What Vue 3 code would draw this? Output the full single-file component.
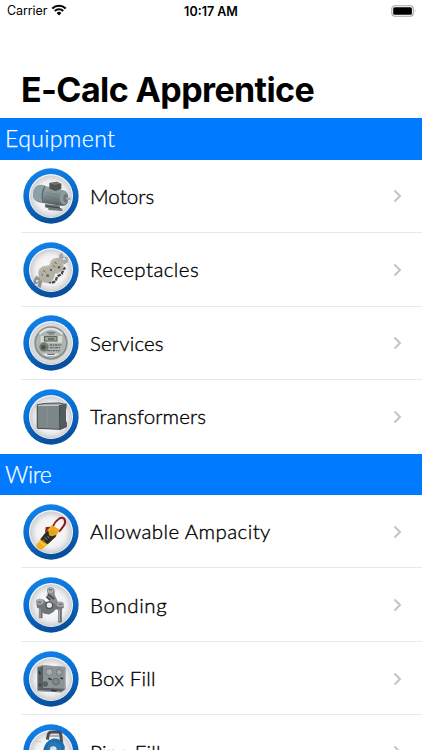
<template>
    <div class="screen">
        <div class="status-bar">
            <div class="status-bar--carrier">
                <span>Carrier</span>
                <svg class="wifi" viewBox="0 0 16 12">
                    <path d="M1.3 4.4a9.6 9.6 0 0 1 13.4 0" />
                    <path d="M3.8 7a6 6 0 0 1 8.4 0" />
                    <path class="wifi--dot" d="M8 11.4 5.6 9a3.4 3.4 0 0 1 4.8 0z" />
                </svg>
            </div>
            <div class="status-bar--time">10:17 AM</div>
            <svg class="battery" viewBox="0 0 26 12">
                <rect x="0.8" y="0.8" width="21.5" height="10.4" rx="3" fill="none" stroke="#a5a5a5" stroke-width="1.1" />
                <rect x="2.2" y="2.2" width="18.7" height="7.6" rx="1.5" />
                <path d="M23.8 4.2q1.5 1.8 0 3.6z" fill="#a5a5a5" />
            </svg>
        </div>

        <h1 class="title">E-Calc Apprentice</h1>

        <section v-for="section in sections" :key="section.title">
            <h2 class="section-header" :style="{ letterSpacing: section.spacing + 'px' }">{{ section.title }}</h2>
            <div v-for="item in section.items" :key="item.label" class="row">
                <svg class="badge" viewBox="-84 -84 168 168">
                    <defs>
                        <linearGradient id="ring" x1="0" y1="0" x2="0.3" y2="1">
                            <stop offset="0" stop-color="#1286ee" />
                            <stop offset="0.5" stop-color="#0b70d2" />
                            <stop offset="1" stop-color="#08509d" />
                        </linearGradient>
                        <radialGradient id="plate">
                            <stop offset="0" stop-color="#fff" />
                            <stop offset="0.7" stop-color="#f1f1f3" />
                            <stop offset="1" stop-color="#cdced2" />
                        </radialGradient>
                        <linearGradient id="metal" x1="0" y1="0" x2="0" y2="1">
                            <stop offset="0" stop-color="#a0acaf" />
                            <stop offset="0.5" stop-color="#7f8d90" />
                            <stop offset="1" stop-color="#505b5e" />
                        </linearGradient>
                    </defs>
                    <circle r="83" fill="url(#ring)" />
                    <circle r="66" fill="#f4f7fb" />
                    <circle cy="1" r="63" fill="url(#plate)" />

                    <g v-if="item.icon === 'motor'" transform="translate(-109 -104)">
                        <path d="M91 128l44 4v7l8 3v7l-42-3v-5l-10-3z" fill="#6d7779" />
                        <path d="M94 134l42 6" stroke="#353e40" stroke-width="3" />
                        <path d="M66 74q10-6 28 0l50 12q15 4 16 18l-1 20q-5 11-20 9l-59-9q-21-4-25-18-1-23 11-32z" fill="url(#metal)" />
                        <path d="M67 74q10-7 26 0-12 17-6 50l-11-3q-19-4-21-18-1-19 12-29z" fill="#8ba1a7" />
                        <path d="M91 75q-13 20-6 49" fill="none" stroke="#5a686c" stroke-width="4" />
                        <path d="M96 94l44 9M94 103l45 9M95 112l43 9" stroke="#6d7b7e" stroke-width="2" />
                        <ellipse cx="148" cy="109" rx="13" ry="21" fill="#8d9a9c" />
                        <ellipse cx="153" cy="111" rx="7" ry="13" fill="#6b7678" />
                        <path d="M153 111l15 2" stroke="#a2a7a4" stroke-width="6" />
                        <path d="M104 65l22-4 14 6v16l-18 6-18-7z" fill="#50554f" />
                        <path d="M105 65l21-2 12 4-18 4z" fill="#727971" />
                    </g>

                    <g v-else-if="item.icon === 'receptacle'" transform="translate(-109 -105)">
                        <path d="M56 137l9-15 19 12-6 24-9-2 2-12-13 5z" fill="#8e9291" />
                        <path d="M133 61l9-9 5 13 12 2 1 13-10 8-17-10z" fill="#a3a7a5" />
                        <circle cx="68" cy="138" r="4" fill="#ddd" />
                        <circle cx="148" cy="72" r="4" fill="#e2e2e2" />
                        <path d="M99 139l12 5 12-6 4-13 14-8 6-15 5-4" fill="none" stroke="#454a47" stroke-width="7" stroke-dasharray="11 3" />
                        <path d="M72 106q6-14 22-14l10-2q3-20 22-22 15-1 20 15 4 20-10 29-8 6-15 4-1 18-16 26-15 5-26-5-11-12-7-31z" fill="#b4b1a5" />
                        <path d="M74 106q7-12 21-12l11-2q4-17 20-21" fill="none" stroke="#cfccc1" stroke-width="3" />
                        <path d="M86 106l6 6M80 117l5 5M120 81l6 6M116 92l5 5" stroke="#57564f" stroke-width="3" />
                        <circle cx="99" cy="122" r="4" fill="#64625b" />
                        <circle cx="133" cy="97" r="4" fill="#64625b" />
                        <circle cx="109" cy="105" r="3" fill="#45453f" />
                    </g>

                    <g v-else-if="item.icon === 'meter'" transform="translate(-109 -107)">
                        <circle cx="109" cy="107" r="54" fill="#d3d7d7" />
                        <circle cx="109" cy="107" r="50" fill="#858d8b" />
                        <circle cx="109" cy="107" r="45" fill="#aeb5b3" />
                        <path d="M74 80q33-31 70 0" fill="none" stroke="#dde2e0" stroke-width="6" />
                        <path d="M97 75h25M102 80h16" stroke="#666f6d" stroke-width="3" />
                        <rect x="78" y="86" width="64" height="20" fill="#d6dbd6" />
                        <rect x="89" y="88" width="38" height="13" fill="#a2aa9d" stroke="#4f5955" stroke-width="3" />
                        <path d="M100 95h19" stroke="#303a32" stroke-width="3" />
                        <circle cx="88" cy="119" r="14" fill="#777a72" />
                        <circle cx="86" cy="120" r="7" fill="#4e514b" />
                        <path d="M105 113h35M106 121h32M98 130h37" stroke="#5f6965" stroke-width="4" stroke-dasharray="8 2 4 2" />
                        <path d="M83 139h51l-12 7h-27z" fill="#ebeeed" />
                        <path d="M98 141h22" stroke="#4d5450" stroke-width="3" />
                    </g>

                    <g v-else-if="item.icon === 'transformer'" transform="translate(-109 -105)">
                        <path d="M66 68l25-5 44-1 18 5v68l-17 9-1-3-64-1-5-3z" fill="#a2aaac" />
                        <path d="M132 70l22-5v71l-18 8z" fill="#545c5e" />
                        <path d="M68 72l65-1v70l-64-2z" fill="#7d878a" />
                        <path d="M68 68l25-4 42-1 18 5" fill="none" stroke="#4d575a" stroke-width="3" />
                        <path d="M68 71l66-1" stroke="#c1c9cb" stroke-width="3" />
                        <path d="M98 73v66" stroke="#8b9598" stroke-width="2" />
                        <path d="M68 68v72M135 69v74M154 64v16M155 119v17" stroke="#434d50" stroke-width="3" />
                        <path d="M70 139l64 3 18-7" fill="none" stroke="#444c4e" stroke-width="3" />
                    </g>

                    <g v-else-if="item.icon === 'clamp'" transform="translate(-109 -104)">
                        <path d="M115 87q6-15 17-22 11-7 17 0 6 10-3 22-6 10-14 16" fill="none" stroke="#8d1a1c" stroke-width="6" />
                        <path d="M93 89l15-1-5 16-12 1z" fill="#8d2321" />
                        <path d="M111 84l24 13-14 24-32 29-8 7-14-4-2-10 26-36z" fill="#eead19" />
                        <path d="M111 84l24 13-8 13-22-16z" fill="#f0a728" />
                        <path d="M97 100l29 15-27 26-22-15z" fill="#292b28" />
                        <circle cx="112" cy="107" r="10" fill="#dba51d" />
                        <path d="M90 120l8 7M99 117l4 5M85 127l5 4" stroke="#9d9b7e" stroke-width="3" />
                        <path d="M72 131l19 14" stroke="#ffcf49" stroke-width="4" />
                    </g>

                    <g v-else-if="item.icon === 'bond'" transform="translate(-109 -105.5)">
                        <path d="M78 102v43" stroke="#686e70" stroke-width="11" />
                        <path d="M136 105v53" stroke="#686e70" stroke-width="11" />
                        <path d="M76 111v33M134 115v40" stroke="#b7bcbe" stroke-width="3" />
                        <path d="M64 94l10-7 13 3 10 9 10-7 10 5 13-2 15 5 3 12-9 8-16-1-8 8-12 7-17-3-9-14-10-3z" fill="#717779" />
                        <circle cx="104" cy="106" r="10" fill="#e7e8e9" stroke="#4b5153" stroke-width="4" />
                        <path d="M97 62q0-10 10-10 11 0 13 10v12l9 20-8 9-16-9-12-13 6-7z" fill="#858b8d" />
                        <circle cx="108" cy="62" r="8" fill="#adb3b4" />
                        <path d="M100 74l19 14M96 82l11 8" stroke="#42484a" stroke-width="5" />
                        <ellipse cx="75" cy="96" rx="12" ry="9" fill="#a3a9ab" />
                        <ellipse cx="137" cy="103" rx="11" ry="8" fill="#a3a9ab" />
                        <path d="M69 97h11M132 103h10M103 60h9" stroke="#505759" stroke-width="3" />
                    </g>

                    <g v-else-if="item.icon === 'box'" transform="translate(-109 -104)">
                        <path d="M68 69l15-6 69 5v67l-11 9-72-4z" fill="#5d6467" />
                        <path d="M83 65l68 5v65l-68-3z" fill="#8d9496" />
                        <path d="M68 69l15-5v68l-14 8z" fill="#5a6265" />
                        <path d="M69 69l14-5 68 5v66l-10 8-72-4z" fill="none" stroke="#9ba2a5" stroke-width="3" />
                        <path d="M83 66v66M83 132l67 3" stroke="#555d60" stroke-width="3" />
                        <circle cx="104" cy="83" r="10" fill="#aab0b1" stroke="#697073" stroke-width="2" />
                        <circle cx="134" cy="84" r="9" fill="#a2a9ab" stroke="#5d6467" stroke-width="2" />
                        <circle cx="124" cy="112" r="10" fill="#818889" stroke="#4d5457" stroke-width="2" />
                        <circle cx="92" cy="119" r="8" fill="#596063" />
                        <path d="M101 102l10 4M73 81l4 9M137 101l8 2M74 119l4 5M110 138l16 2" stroke="#31383a" stroke-width="5" />
                    </g>

                    <g v-else transform="translate(-109 -108)">
                        <path d="M98 71l3-15q2-8 10-8h20q6 0 7 7l3 25" fill="none" stroke="#4c4c4f" stroke-width="9" />
                        <path d="M105 60h28" stroke="#929499" stroke-width="4" />
                        <path d="M63 76l18 1" stroke="#b9bcc1" stroke-width="2" />
                        <path d="M86 101q5-25 27-33 29-3 37 23v52H86z" fill="#1a6eb0" />
                        <circle cx="119" cy="98" r="21" fill="#2878b5" />
                        <circle cx="116" cy="101" r="10" fill="#d7e5ef" />
                    </g>
                </svg>
                <span class="label" :style="{ letterSpacing: item.spacing + 'px' }">{{ item.label }}</span>
                <svg class="chevron" viewBox="0 0 9 14">
                    <path d="M1.5 1.5 7 7l-5.5 5.5" />
                </svg>
            </div>
        </section>
    </div>
</template>

<script setup>
const sections = [
    {
        title: 'Equipment',
        spacing: 0.4,
        items: [
            { label: 'Motors', icon: 'motor', spacing: 0.1 },
            { label: 'Receptacles', icon: 'receptacle', spacing: 0.43 },
            { label: 'Services', icon: 'meter', spacing: 0.15 },
            { label: 'Transformers', icon: 'transformer', spacing: 0.13 },
        ],
    },
    {
        title: 'Wire',
        spacing: -0.4,
        items: [
            { label: 'Allowable Ampacity', icon: 'clamp', spacing: 0.42 },
            { label: 'Bonding', icon: 'bond', spacing: 0.6 },
            { label: 'Box Fill', icon: 'box', spacing: 0.2 },
            { label: 'Pipe Fill', icon: 'pipe', spacing: 0.2 },
        ],
    },
];
</script>

<style>
body {
    margin: 0;
    overflow: hidden;
}
</style>

<style scoped>
.screen {
    height: 750px;
    overflow: hidden;
    background: #fff;
    color: #000;
    font-family: Lato, sans-serif;
}

.status-bar {
    display: grid;
    grid-template-columns: 1fr auto 1fr;
    align-items: center;
    height: 22px;
    padding: 0 5px 0 7px;
    font: 12.5px/22px Inter, sans-serif;
}

.status-bar--carrier {
    display: flex;
    align-items: center;
    gap: 4px;
    letter-spacing: -0.1px;
}

.status-bar--time {
    padding-top: 1px;
    font-weight: 600;
    line-height: 21px;
    margin-left: -2px;
}

.wifi {
    width: 16px;
    height: 12px;
    margin-top: -2px;
    fill: none;
    stroke: #000;
    stroke-width: 2.1;
}

.wifi--dot {
    fill: #000;
    stroke: none;
}

.battery {
    width: 26px;
    height: 12px;
    justify-self: end;
    margin-top: -1px;
}

.title {
    box-sizing: border-box;
    height: 96.3px;
    margin: 0;
    padding: 46px 0 0 21px;
    font: 700 34px/44px Inter, sans-serif;
    letter-spacing: -0.6px;
    white-space: nowrap;
}

.section-header {
    height: 41.3px;
    margin: 0;
    padding-left: 5px;
    background: #007aff;
    color: #fff;
    font-size: 23px;
    font-weight: 300;
    line-height: 41px;
    -webkit-text-stroke: 0.25px #fff;
}

.row {
    display: flex;
    align-items: center;
    box-sizing: border-box;
    height: 73.5px;
    padding: 0 20px 0 23.2px;
    background: linear-gradient(#e9e9eb, #e9e9eb) 21px 100% / 100% 1px no-repeat;
}

.row:last-child {
    background: none;
}

.badge {
    flex: none;
    width: 56px;
    height: 56px;
}

.label {
    flex: 1;
    margin-left: 10.8px;
    font-size: 20.5px;
    font-weight: 300;
    line-height: 27px;
    white-space: nowrap;
    -webkit-text-stroke: 0.35px #000;
}

.chevron {
    width: 9px;
    height: 14px;
    fill: none;
    stroke: #c4c4c7;
    stroke-width: 2;
}
</style>
